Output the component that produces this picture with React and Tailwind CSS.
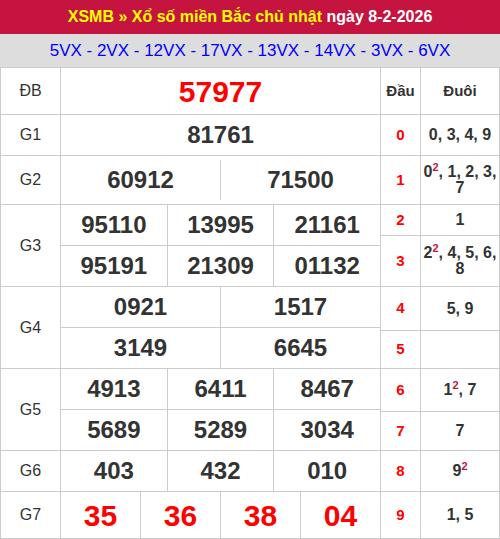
import React from "react";

const B = "border-[#cccccc]";

function Sup({ children }) {
  return (
    <span className="relative top-[-6px] text-[11px] leading-none text-[#c4143f]">{children}</span>
  );
}

function Label({ children, h }) {
  return (
    <div className={`w-[60px] shrink-0 border-r border-b ${B} flex items-center justify-center text-[16px] text-[#333]`} style={{ height: h }}>
      {children}
    </div>
  );
}

function NumRow({ nums, h, red }) {
  return (
    <div className="flex" style={{ height: h }}>
      {nums.map((n, i) => (
        <div
          key={i}
          className={`flex-1 basis-0 border-r border-b ${B} flex items-center justify-center font-bold ${
            red ? "text-[30px] text-[#ff0000]" : "text-[24px] text-[#333]"
          }`}
        >
          {n}
        </div>
      ))}
    </div>
  );
}

function Prize({ label, rows, h, red }) {
  return (
    <div className="flex">
      <Label h={h * rows.length}>{label}</Label>
      <div className="flex-1 flex flex-col">
        {rows.map((r, i) => (
          <NumRow key={i} nums={r} h={h} red={red} />
        ))}
      </div>
    </div>
  );
}

const loto = [
  { d: "0", t: <>0, 3, 4, 9</>, h: 41 },
  { d: "1", t: <>0<Sup>2</Sup>, 1, 2, 3, 7</>, h: 49 },
  { d: "2", t: <>1</>, h: 31 },
  { d: "3", t: <>2<Sup>2</Sup>, 4, 5, 6, 8</>, h: 51 },
  { d: "4", t: <>5, 9</>, h: 44 },
  { d: "5", t: <></>, h: 38 },
  { d: "6", t: <>1<Sup>2</Sup>, 7</>, h: 43 },
  { d: "7", t: <>7</>, h: 39 },
  { d: "8", t: <>9<Sup>2</Sup></>, h: 41 },
  { d: "9", t: <>1, 5</>, h: 47 },
];

export default function App() {
  return (
    <div className="w-[500px] h-[539px] overflow-hidden bg-white font-['Liberation_Sans',Arial,sans-serif] text-[#333]">
      <div className="h-[34px] bg-[#c4143f] flex items-center justify-center text-[16px] font-bold">
        <span className="text-[#ffff00]">XSMB » Xổ số miền Bắc chủ nhật</span>
        <span className="text-white">&nbsp;ngày 8-2-2026</span>
      </div>
      <div className="h-[33px] bg-[#dddddd] flex items-center justify-center text-[17px] text-[#0000ff]">
        5VX - 2VX - 12VX - 17VX - 13VX - 14VX - 3VX - 6VX
      </div>
      <div className="flex">
        <div className={`w-[381px] border-l border-t ${B} flex flex-col`}>
          <Prize label="ĐB" rows={[["57977"]]} h={47} red />
          <Prize label="G1" rows={[["81761"]]} h={41} />
          <div className="flex">
            <Label h={49}>G2</Label>
            <div className={`flex-1 flex border-r border-b ${B} h-[49px]`}>
              <div className="flex-1 basis-0 flex items-center justify-center text-[24px] font-bold">60912</div>
              <div className="w-px bg-[#cccccc] my-[4px]"></div>
              <div className="flex-1 basis-0 flex items-center justify-center text-[24px] font-bold">71500</div>
            </div>
          </div>
          <Prize label="G3" rows={[["95110", "13995", "21161"], ["95191", "21309", "01132"]]} h={41} />
          <Prize label="G4" rows={[["0921", "1517"], ["3149", "6645"]]} h={41} />
          <Prize label="G5" rows={[["4913", "6411", "8467"], ["5689", "5289", "3034"]]} h={41} />
          <Prize label="G6" rows={[["403", "432", "010"]]} h={41} />
          <Prize label="G7" rows={[["35", "36", "38", "04"]]} h={47} red />
        </div>
        <div className={`w-[119px] border-t ${B} flex flex-col`}>
          <div className="flex h-[47px]">
            <div className={`w-[40px] border-r border-b ${B} flex items-center justify-center text-[15px] font-bold`}>Đầu</div>
            <div className={`flex-1 border-r border-b ${B} flex items-center justify-center text-[15px] font-bold`}>Đuôi</div>
          </div>
          {loto.map((r) => (
            <div key={r.d} className="flex" style={{ height: r.h }}>
              <div className={`w-[40px] border-r border-b ${B} flex items-center justify-center text-[15px] font-bold text-[#ff0000]`}>
                {r.d}
              </div>
              <div className={`flex-1 border-r border-b ${B} flex items-center justify-center text-center px-[2px] text-[16px] leading-[16px] font-bold text-[#333]`}>
                <div>{r.t}</div>
              </div>
            </div>
          ))}
        </div>
      </div>
    </div>
  );
}
